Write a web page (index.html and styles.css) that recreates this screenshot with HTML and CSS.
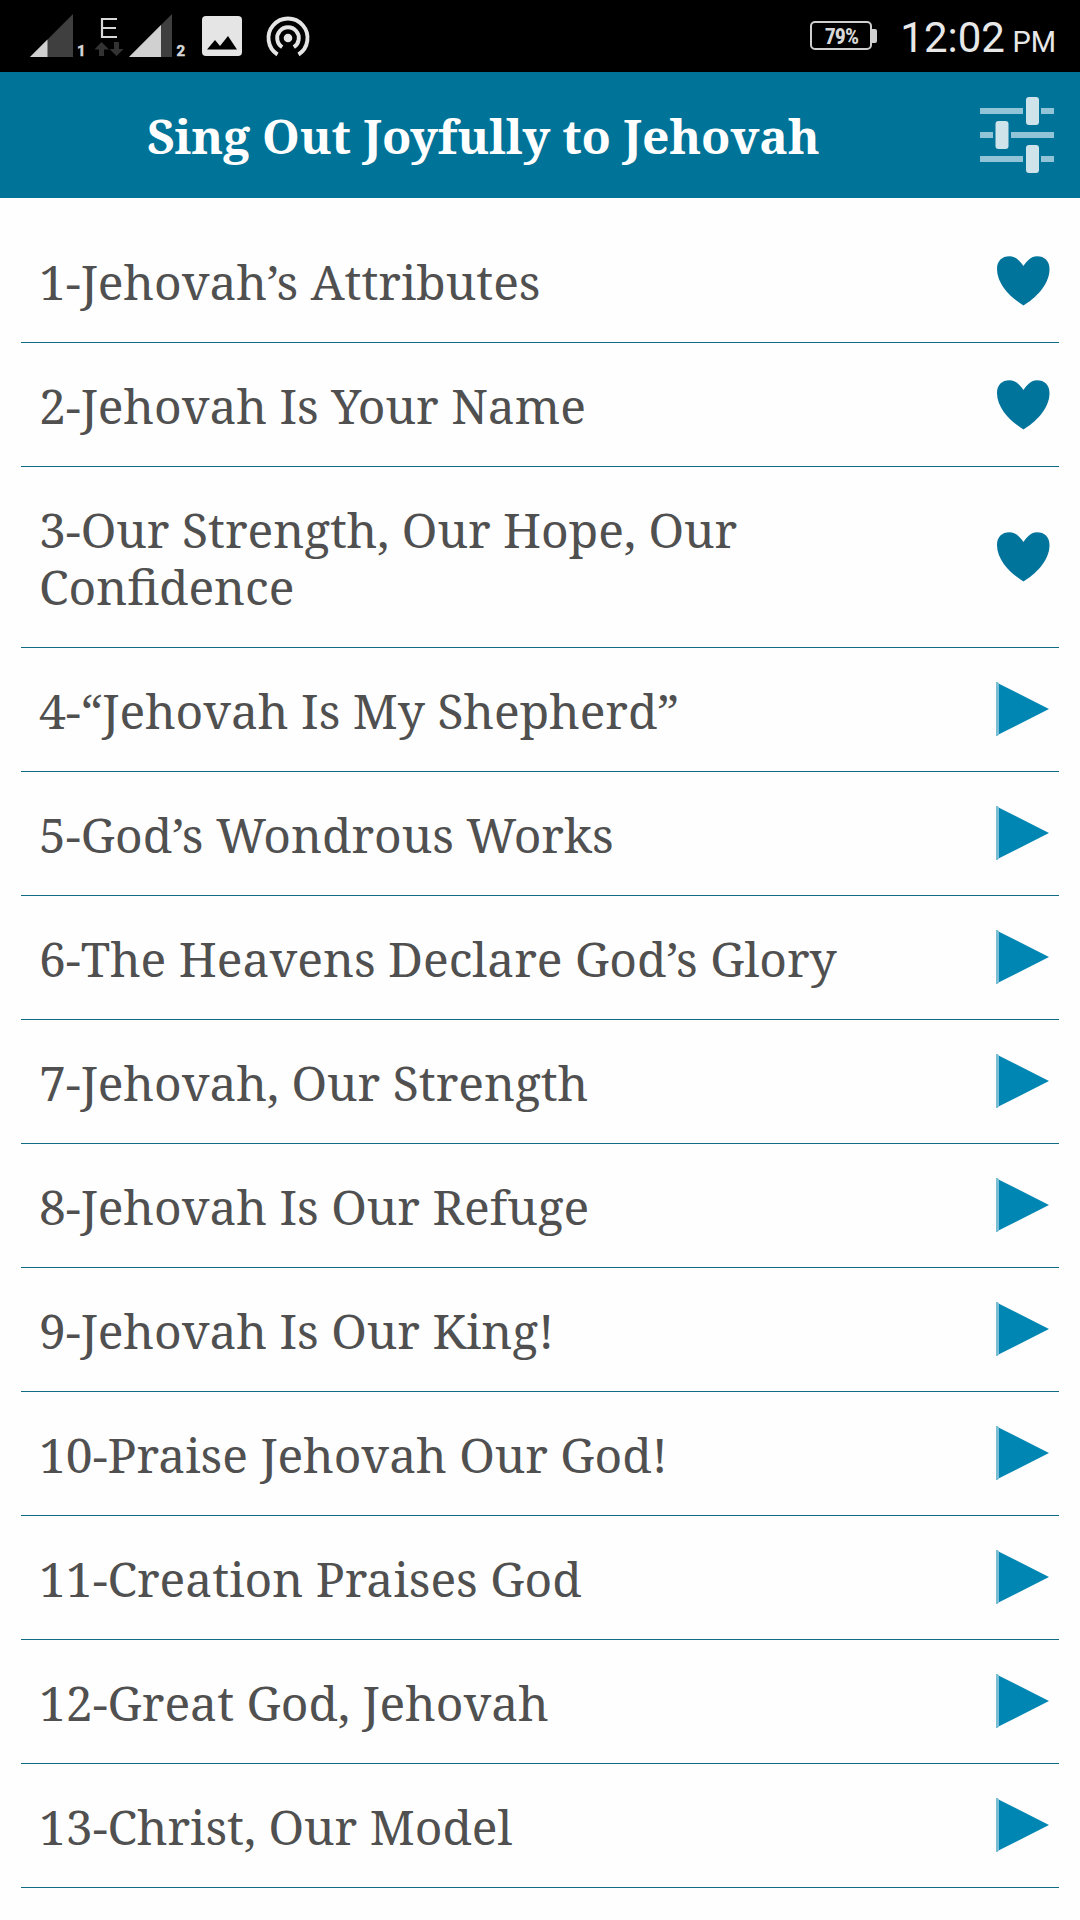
FILE: index.html
```html
<!DOCTYPE html>
<html lang="en"><head><meta charset="utf-8"><title>Sing Out Joyfully to Jehovah</title><link rel="stylesheet" href="styles.css"></head>
<body>
<svg class="symbols" aria-hidden="true">
<symbol id="heart" viewBox="0 0 54 54"><path fill="#00749a" d="M27.500 51.500C16 44.500 1 31 1 15C1 7 6 2.300 13.500 2.300C20 2.300 24 7 27.500 12C31 7 35 2.300 41 2.300C48.500 2.300 53.500 7 53.500 15C53.500 31 39 44.500 27.500 51.500Z"/></symbol>
<symbol id="play" viewBox="0 0 54 54"><path fill="#0086b3" d="M1.500 1L53 27L1.500 53Z"/><path fill="#79bdd5" d="M0 0H1.500L3 1.500V52.500L1.500 54H0Z"/></symbol>
</svg>
<header class="status">
<svg class="signals" width="320" height="72" viewBox="0 0 320 72">
<path fill="#3f3f3f" d="M30 57H73V14ZM129 57H172V14Z"/><path fill="#d0d0d0" d="M30 57H47.500V39.500ZM129 57H161V25Z"/>
<path fill="#333" d="M101.500 42L109 49.500H104V56H99V49.500H94.500ZM116.500 56L109.500 49H114V42H119V49H123.500Z"/>
<path fill="none" stroke="#d8d8d8" stroke-width="2.200" d="M117 19H102V37H117M102 28H116"/>
<text class="sim" x="77" y="56">1</text><text class="sim" x="176.500" y="56">2</text>
<rect x="202" y="16" width="40" height="40" rx="4" fill="#e5e5e5"/><path d="M207 49.500L215 40L220 46L228 36L237 49.500Z"/>
<g fill="none" stroke="#e5e5e5" stroke-width="3.900"><path d="M277.500 54.500A19.500 19.500 0 1 1 298.500 54.500M282.200 47.200A10.800 10.800 0 1 1 293.800 47.200"/></g><circle cx="288" cy="38" r="4.300" fill="#e5e5e5"/>
</svg>
<div class="right"><div class="battery">79%</div><div class="clock">12:02 <span>PM</span></div></div>
</header>
<div class="bar"><h1>Sing Out Joyfully to Jehovah</h1>
<svg class="tune" width="76" height="80" viewBox="979 95 76 80"><path stroke="#91c4d6" stroke-width="6" d="M980 111H1023M1041 111H1054M980 135H993M1011 135H1054M980 159H1023M1041 159H1054"/><g fill="#cfe3eb"><rect x="1026" y="97" width="13" height="28" rx="3"/><rect x="995.500" y="121" width="13" height="28" rx="3"/><rect x="1026" y="145" width="13" height="28" rx="3"/></g></svg></div>
<ul class="songs">
<li><span>1-Jehovah’s Attributes</span><svg class="heart"><use href="#heart"/></svg></li>
<li><span>2-Jehovah Is Your Name</span><svg class="heart"><use href="#heart"/></svg></li>
<li><span>3-Our Strength, Our Hope, Our<br>Confidence</span><svg class="heart"><use href="#heart"/></svg></li>
<li><span>4-“Jehovah Is My Shepherd”</span><svg><use href="#play"/></svg></li>
<li><span>5-God’s Wondrous Works</span><svg><use href="#play"/></svg></li>
<li><span>6-The Heavens Declare God’s Glory</span><svg><use href="#play"/></svg></li>
<li><span>7-Jehovah, Our Strength</span><svg><use href="#play"/></svg></li>
<li><span>8-Jehovah Is Our Refuge</span><svg><use href="#play"/></svg></li>
<li><span>9-Jehovah Is Our King!</span><svg><use href="#play"/></svg></li>
<li><span>10-Praise Jehovah Our God!</span><svg><use href="#play"/></svg></li>
<li><span>11-Creation Praises God</span><svg><use href="#play"/></svg></li>
<li><span>12-Great God, Jehovah</span><svg><use href="#play"/></svg></li>
<li><span>13-Christ, Our Model</span><svg><use href="#play"/></svg></li>
</ul>
</body></html>
```
FILE: styles.css
```css
*{box-sizing:border-box}
body{margin:0;width:1080px;height:1920px;overflow:hidden;background:#fefefe;font-family:"Noto Serif","Droid Serif","DejaVu Serif Condensed","DejaVu Serif",serif}
.symbols{display:none}
.status{height:72px;background:#000;display:flex;justify-content:space-between;color:#e8e8e8;font-family:Roboto,sans-serif}
.sim{font:bold 15px Roboto,sans-serif;fill:#d8d8d8;stroke:#d8d8d8;stroke-width:.5px}
.right{display:flex;padding-right:24px}
.battery{position:relative;width:62px;height:29px;margin:21px 28px 0 0;border:2px solid #cfcfcf;border-radius:5px;font:bold 22px/28px "Roboto Condensed",Roboto,sans-serif;text-align:center;letter-spacing:-1px;color:#d8d8d8}
.battery::after{content:"";position:absolute;left:60px;top:6px;width:5px;height:14px;background:#cfcfcf;border-radius:0 2px 2px 0}
.clock{font-size:42px;line-height:76px;white-space:nowrap;word-spacing:-3px}
.clock span{font-size:29px}
.bar{height:126px;background:#007398;display:flex;justify-content:space-between;align-items:center;padding:0 25px 0 147px}
h1{margin:0;color:#fff;font-size:48px;line-height:57px;font-weight:bold;white-space:nowrap;letter-spacing:-.19px}
.songs{list-style:none;margin:0;padding:21px 21px 0}
li{display:flex;justify-content:space-between;align-items:center;padding:34px 9px 32px 18px;border-bottom:1px solid #126b84;color:#505050;font-size:48px;line-height:57px;white-space:nowrap}
li svg{width:54px;height:54px;margin-top:-4px}
li .heart{margin-top:-2px}
```
